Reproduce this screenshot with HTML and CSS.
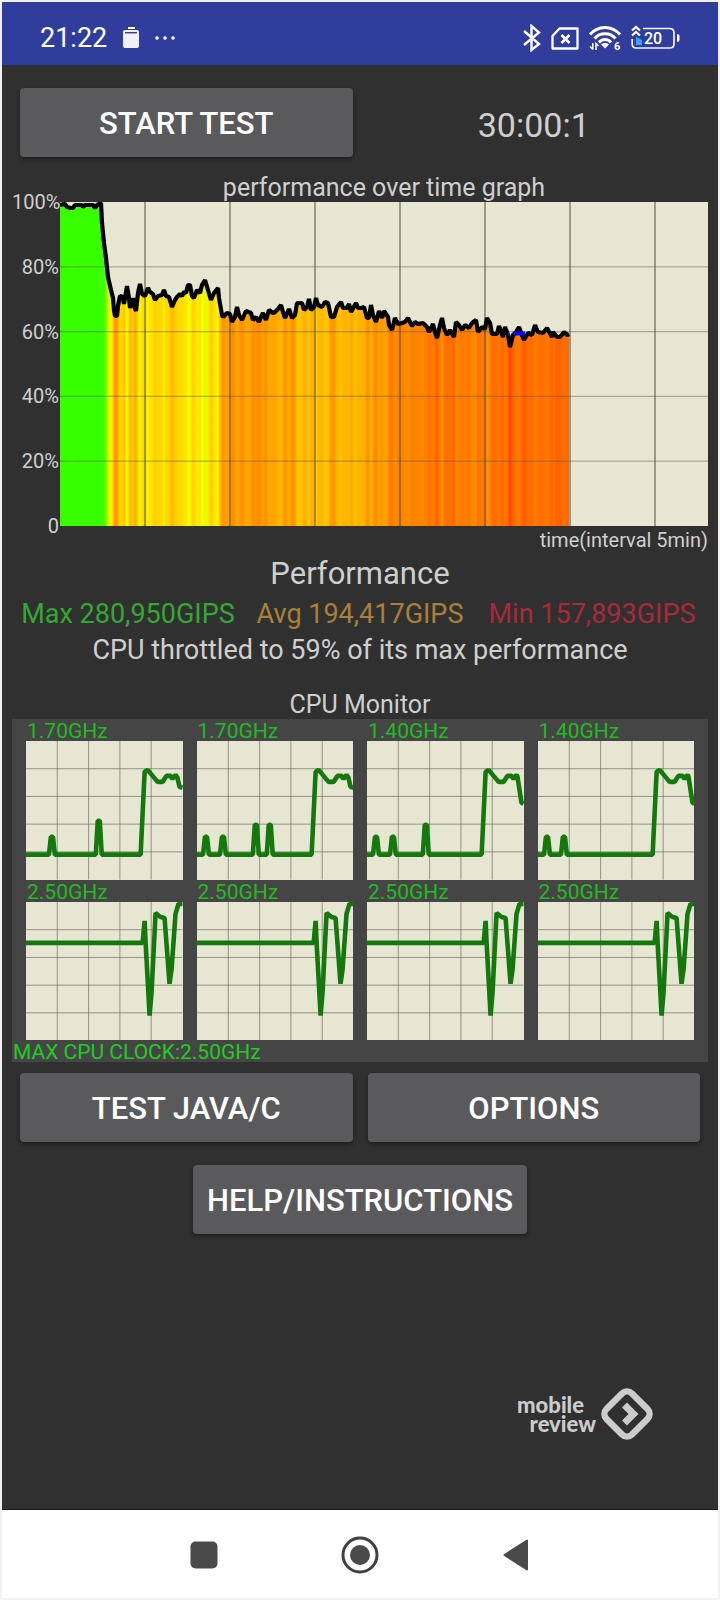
FILE: index.html
```html
<!DOCTYPE html>
<html lang="en">
<head>
<meta charset="utf-8">
<meta name="viewport" content="width=device-width, initial-scale=1">
<title>CPU Throttling Test</title>
<link rel="stylesheet" href="styles.css">
</head>
<body>
<div class="screen">
  <header class="status">
    <time class="clock">21:22</time>
    <svg class="card-icon" width="16" height="21" viewBox="0 0 16 21" aria-hidden="true">
      <rect x="5" y="0" width="7" height="2" fill="#fff"/>
      <rect x="0" y="3" width="16" height="18" rx="2" fill="#f0f0fa"/>
      <rect x="2" y="5" width="12" height="1.4" fill="#303d9d"/>
    </svg>
    <svg width="20" height="4" viewBox="0 0 20 4" fill="#fff" aria-hidden="true"><circle cx="2" cy="2" r="1.8"/><circle cx="10" cy="2" r="1.8"/><circle cx="18" cy="2" r="1.8"/></svg>
    <div class="status-right">
      <svg width="18" height="28" viewBox="0 0 18 28" fill="none" stroke="#fff" stroke-width="2.4" aria-label="Bluetooth"><path d="M1 7l15 13-7.500 6V2L16 8.500 1 21"/></svg>
      <svg class="sim" width="28" height="23" viewBox="0 0 28 23" fill="none" stroke="#fff" stroke-width="2.3" stroke-linejoin="round" aria-label="No SIM"><path d="M8.500 1.500H26.500V21.500H1.500V9z"/><path d="M10.500 8l8 8M18.500 8l-8 8" stroke-width="2.600"/></svg>
      <svg class="wifi" width="32" height="26" viewBox="0 0 32 26" aria-label="Wi-Fi 6">
        <g fill="none" stroke="#fff" stroke-width="3"><path d="M1 9.500C9 0 23 0 31 9.500"/><path d="M5.500 13.500C11 7 21 7 26.500 13.500"/><path d="M10 17.500C13 13.500 19 13.500 22 17.500"/></g>
        <path d="M12 19.500q4-3.500 8 0l-4 4z" fill="#fff"/>
        <path d="M3.800 18v6.500M1 21.500l2.800 3M7 25v-6.500l2.500 2.500" fill="none" stroke="#fff" stroke-width="1.500"/>
        <text x="25" y="25" class="wifi-num">6</text>
      </svg>
      <svg width="49" height="26" viewBox="0 0 49 26" aria-label="Battery 20 percent">
        <path d="M12 3.500H38.500Q43 3.500 43 8V19Q43 23 38.500 23H5Q1.200 23 1.200 19V14" fill="none" stroke="#f4f4ff" stroke-width="1.700"/>
        <path d="M46 9q2.500 0 2.500 2v4q0 2-2.500 2z" fill="#fff"/>
        <path d="M5 12l6 3v5H5z" fill="#3ea0ff"/>
        <path d="M1 5.500l4-3.500 4 3.500M1 10.500l4-3.500 4 3.500" fill="none" stroke="#fff" stroke-width="2.200"/>
        <text x="13" y="19" class="battery-num">20</text>
      </svg>
    </div>
  </header>

  <main class="content">
    <div class="pair">
      <button class="btn" type="button">START TEST</button>
      <output class="timer">30:00:1</output>
    </div>

    <section class="graph" aria-label="performance over time">
      <h2 class="graph-title">performance over time graph</h2>
      <div class="axis"><span>100%</span><span>80%</span><span>60%</span><span>40%</span><span>20%</span><span>0</span></div>
      <svg class="plot" id="perf" viewBox="0 0 648 324"></svg>
      <p class="axis-x">time(interval 5min)</p>
    </section>

    <h2 class="perf-title">Performance</h2>
    <div class="stats"><span class="max">Max 280,950GIPS</span><span class="avg">Avg 194,417GIPS</span><span class="min">Min 157,893GIPS</span></div>
    <p class="verdict">CPU throttled to 59% of its max performance</p>

    <h2 class="monitor-title">CPU Monitor</h2>
    <section class="monitor">
      <div class="cores" id="cores"></div>
      <p class="max-clock">MAX CPU CLOCK:2.50GHz</p>
    </section>

    <div class="pair lower">
      <button class="btn" type="button">TEST JAVA/C</button>
      <button class="btn" type="button">OPTIONS</button>
    </div>
    <button class="btn help" type="button">HELP/INSTRUCTIONS</button>

    <div class="brand">
      <p class="brand-name"><span>mobile</span><span class="brand-second">review</span></p>
      <svg width="54" height="54" viewBox="0 0 54 54" aria-hidden="true">
        <rect x="9" y="9" width="36" height="36" rx="7" transform="rotate(45 27 27)" fill="none" stroke="#ccc" stroke-width="6.500"/>
        <path d="M24.500 18l9 9-9 9" fill="none" stroke="#ccc" stroke-width="7"/>
      </svg>
    </div>
  </main>

  <nav class="nav">
    <button type="button" aria-label="Recent apps"><svg width="28" height="28" viewBox="0 0 28 28"><rect x=".5" y=".5" width="27" height="27" rx="5" fill="#4a4a4a"/></svg></button>
    <button type="button" aria-label="Home"><svg width="38" height="38" viewBox="0 0 38 38"><circle cx="19" cy="19" r="17" fill="none" stroke="#404040" stroke-width="3"/><circle cx="19" cy="19" r="10" fill="#4a4a4a"/></svg></button>
    <button type="button" aria-label="Back"><svg width="26" height="32" viewBox="0 0 26 32"><path d="M1.500 16L24 1.500V30.500z" fill="#4a4a4a" stroke="#4a4a4a" stroke-width="2" stroke-linejoin="round"/></svg></button>
  </nav>
</div>
<script src="charts.js"></script>
</body>
</html>
```
FILE: styles.css
```css
* { box-sizing: border-box; }
body {
  margin: 0;
  padding: 2px;
  background: #f1f1f3;
  font-family: Roboto, "Liberation Sans", sans-serif;
  color: #cfcfcf;
}
h2, p { margin: 0; font-weight: 400; }
svg { display: block; }
button { font-family: inherit; border: 0; cursor: pointer; }

.screen {
  display: flex;
  flex-direction: column;
  min-height: calc(100vh - 4px);
  background: #303030;
}

.status {
  display: flex;
  align-items: center;
  height: 63px;
  padding: 8px 38px 0;
  background: #303d9d;
  color: #fff;
}
.clock { font-size: 27px; font-weight: 400; }
.card-icon { margin: 0 16px 0 16px; }
.status-right {
  display: flex;
  align-items: center;
  gap: 10px;
  margin-left: auto;
}
.sim { margin-top: 2px; }
.wifi { overflow: visible; }
.wifi-num { font-size: 11px; font-weight: 700; fill: #fff; }
.battery-num { font-size: 16px; font-weight: 500; fill: #fff; }

.content {
  flex: 1;
  display: flex;
  flex-direction: column;
  padding: 23px 10px 0;
  border-bottom: 1px solid #1c1c1c;
}
.pair {
  display: grid;
  grid-template-columns: 1fr 1fr;
  gap: 15px;
  padding: 0 8px;
}
.btn {
  height: 69px;
  padding: 2px 14px 0;
  border-radius: 4px;
  background: #5a5a5c;
  box-shadow: 0 2px 4px rgba(0, 0, 0, .4);
  color: #fff;
  font-size: 31px;
  font-weight: 500;
}
.timer { align-self: center; padding-top: 4px; text-align: center; font-size: 34px; }

.graph {
  display: grid;
  grid-template-columns: 48px 1fr;
  margin-top: 16px;
}
.graph-title {
  grid-column: 2;
  text-align: center;
  font-size: 25px;
  line-height: 29px;
}
.axis {
  display: flex;
  flex-direction: column;
  justify-content: space-between;
  margin: -10px 0;
  padding-right: 1px;
  text-align: right;
  font-size: 20px;
  line-height: 20px;
}
.plot { width: 100%; height: auto; background: #e7e6d2; }
.axis-x {
  grid-column: 1 / -1;
  text-align: right;
  font-size: 20px;
  line-height: 28px;
}

.perf-title { margin-top: 2px; text-align: center; font-size: 31px; line-height: 36px; }
.stats {
  display: grid;
  grid-template-columns: repeat(3, 1fr);
  margin-top: 6px;
  text-align: center;
  font-size: 27px;
  line-height: 32px;
  white-space: nowrap;
}
.max { color: #33a833; }
.avg { color: #a88038; }
.min { color: #a82a3a; }
.verdict { margin-top: 4px; text-align: center; font-size: 27px; line-height: 32px; }

.monitor-title { margin-top: 24px; text-align: center; font-size: 25px; line-height: 29px; }
.monitor { background: #454545; color: #22bb22; font-size: 21px; }
.cores {
  display: grid;
  grid-template-columns: repeat(4, 1fr);
  column-gap: 14px;
  padding: 0 14px;
}
.core-label { padding: 2px 0 0 1px; line-height: 20px; }
.core-plot { width: 100%; height: auto; background: #e7e6d2; }
.max-clock { padding: 2px 0 0 1px; line-height: 20px; color: #22cc22; }

.lower { margin-top: 11px; }
.help { align-self: center; margin-top: 23px; }

.brand {
  display: flex;
  align-items: center;
  align-self: flex-end;
  gap: 4px;
  margin: 153px 54px 24px 0;
}
.brand-name {
  display: flex;
  flex-direction: column;
  align-items: flex-end;
  color: #ccc;
  font-family: Lato, "Open Sans", sans-serif;
  font-size: 22px;
  font-weight: 900;
  line-height: 19px;
}
.brand-name span:first-child { padding-right: 12px; }

.nav {
  display: grid;
  grid-template-columns: repeat(3, 156px);
  justify-content: center;
  height: 88px;
  background: #fff;
}
.nav button {
  display: grid;
  place-items: center;
  padding: 2px 0 0;
  background: none;
}
```
FILE: charts.js
```js
const NS = "http://www.w3.org/2000/svg";

function add(parent, name, attrs) {
  const node = document.createElementNS(NS, name);
  for (const key in attrs) node.setAttribute(key, attrs[key]);
  parent.appendChild(node);
  return node;
}

const toPoints = text => text.trim().split(/\s+/).map(pair => pair.split(",").map(Number));

// Throughput trace: x is elapsed time, y is distance below 100%.
const trace = toPoints(`
0,3 5,2 7,5 11,6 13,6 15,3 22,3 23,5 25,3 33,3 35,6 37,3 41,1 42,21 44,41 46,56 48,75 51,88 53,96 54,108 55,114 57,114
58,104 60,94 63,95 64,102 65,96 67,84 69,96 70,106 73,96 74,103 76,109 78,91 80,82 82,92 85,94 88,86 90,90 93,92
95,98 98,94 102,93 104,88 106,94 109,95 112,105 115,98 117,95 120,92 122,94 124,90 126,91 128,83 130,83 132,94
134,96 137,88 140,91 142,83 145,78 148,88 151,98 154,91 158,86 159,96 162,113 163,115 165,113 167,111 170,112
172,120 175,115 177,105 179,113 182,118 186,109 191,111 193,118 196,115 199,120 201,115 203,111 206,118 209,108
213,111 215,110 218,107 221,103 223,110 225,116 229,107 232,116 235,113 237,101 242,101 244,108 247,105 249,97
251,108 254,105 256,96 258,103 262,105 265,100 268,101 271,115 274,115 277,105 281,100 283,106 287,106 289,102
291,110 296,101 298,106 302,106 304,105 307,116 309,116 311,103 313,113 316,120 319,109 322,116 324,109 328,115
329,123 332,128 335,116 338,122 342,121 345,120 348,116 352,124 355,120 358,122 363,121 367,125 369,130 373,122
375,130 377,136 380,123 382,116 384,126 387,133 390,128 394,135 396,120 399,123 402,128 405,123 409,126 412,121
416,118 418,130 422,125 425,127 427,116 430,121 432,132 437,132 439,124 443,135 445,125 448,133 450,145 453,133
456,130 459,125 462,133 464,138 468,131 472,133 475,123 478,130 483,131 487,126 491,133 492,135 493,130 497,135
500,135 504,130 507,133 509,132`);

// Colour ramp by distance below 100%.
const ramp = [[0, 56, 255, 0], [45, 60, 255, 0], [68, 170, 255, 0], [84, 255, 255, 0], [92, 255, 222, 0],
  [100, 255, 198, 0], [112, 255, 158, 0], [122, 255, 130, 0], [131, 255, 112, 0], [145, 255, 64, 0], [324, 255, 0, 0]];

function colourAt(y) {
  const i = Math.max(1, ramp.findIndex(stop => stop[0] >= y));
  const low = ramp[i - 1], high = ramp[i];
  const t = (y - low[0]) / (high[0] - low[0]);
  return `rgb(${[1, 2, 3].map(c => Math.round(low[c] + t * (high[c] - low[c]))).join(",")})`;
}

const perf = document.getElementById("perf");
const gradient = add(add(perf, "defs", {}), "linearGradient",
  { id: "heat", gradientUnits: "userSpaceOnUse", x1: 0, y1: 0, x2: 509, y2: 0 });
trace.forEach(([x, y]) => add(gradient, "stop", { offset: x / 509, "stop-color": colourAt(y) }));
add(perf, "path", { d: `M0 324L${trace.join("L")}L509 324z`, fill: "url(#heat)" });
for (let x = 85; x < 648; x += 85) add(perf, "path", { d: `M${x} 0V324`, stroke: "#404030", "stroke-opacity": .65, "stroke-width": 1.4 });
for (let i = 1; i < 5; i++) add(perf, "path", { d: `M0 ${i * 64.8}H648`, stroke: "#505058", "stroke-opacity": .42, "stroke-width": 1.3 });
add(perf, "polyline", { points: trace.join(" "), fill: "none", stroke: "#000", "stroke-width": 4.2, "stroke-linejoin": "bevel" });
add(perf, "path", { d: "M448 131.500H449M454 131.500H465", stroke: "#0808ff", "stroke-width": 4 });

const spike = (x, top) => `${x - 3},114 ${x - 1},${top} ${x + 1},${top} ${x + 3},114`;
const small = (spikes, end) => `0,114 ${spikes} 115,114 119,31 122,29 127,35 132,41 137,41 141,35 145,35 147,38 150,34 ${end}`;
const slight = "152,37 154,46 157,47";
const deep = "151,36 155,62 157,63";
const big = "0,41 117,41 119,19 120,41 124,114 126,90 130,11 135,15 139,16 144,82 146,68 150,12 153,2 157,2";
const cores = [
  ["1.70GHz", small(`${spike(26, 96)} ${spike(73, 80)}`, slight)],
  ["1.70GHz", small(`${spike(9, 96)} ${spike(26, 96)} ${spike(59, 84)} ${spike(73, 84)}`, slight)],
  ["1.40GHz", small(`${spike(9, 96)} ${spike(26, 96)} ${spike(59, 84)}`, deep)],
  ["1.40GHz", small(`${spike(9, 96)} ${spike(26, 96)}`, deep)],
  ["2.50GHz", big], ["2.50GHz", big], ["2.50GHz", big], ["2.50GHz", big]
];

const grid = document.getElementById("cores");
cores.forEach(([clock, points]) => {
  const core = document.createElement("div");
  const label = document.createElement("p");
  label.className = "core-label";
  label.textContent = clock;
  core.appendChild(label);
  const svg = add(core, "svg", { class: "core-plot", viewBox: "0 0 157 139" });
  for (let i = 1; i < 5; i++) {
    add(svg, "path", { d: `M${i * 31.4} 0V139M0 ${i * 27.8}H157`, stroke: "#707068", "stroke-opacity": .7 });
  }
  add(svg, "polyline", { points, fill: "none", stroke: "#14780c", "stroke-width": 4.6, "stroke-linejoin": "bevel" });
  grid.appendChild(core);
});
```
